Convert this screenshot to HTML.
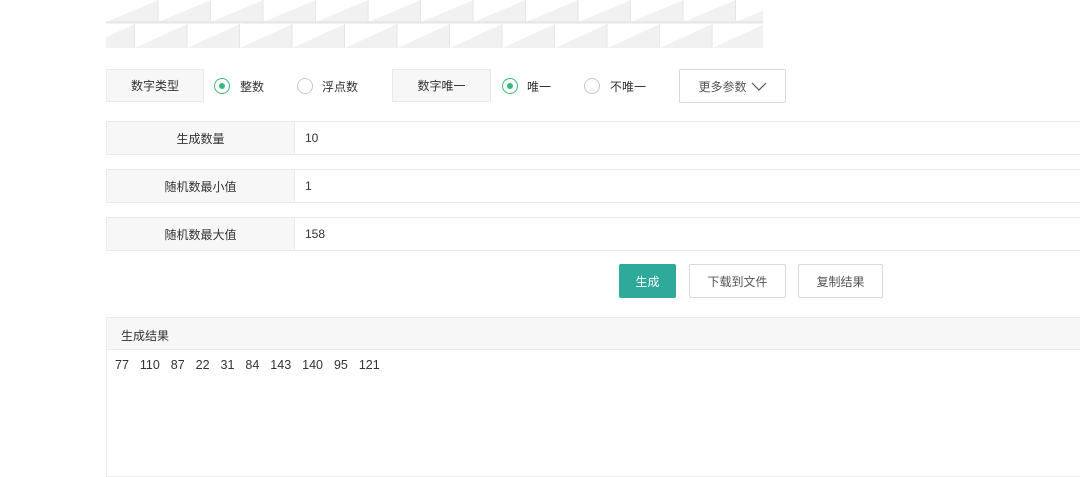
<!DOCTYPE html>
<html><head><meta charset="utf-8"><style>
body{margin:0;width:1080px;height:471px;overflow:hidden;background:#fff;font-family:"Liberation Sans","Noto Sans CJK SC",sans-serif;font-size:12px;color:#333;position:relative}
.a{position:absolute;box-sizing:border-box}
.lbl{background:#f7f7f7;border:1px solid #eaeaea;display:flex;align-items:center;justify-content:center}
.radio{width:16px;height:16px;border:1px solid #c8c8c8;border-radius:50%;box-sizing:border-box}
.on{border-color:#3cb878}
.on::after{content:"";position:absolute;left:4px;top:4px;width:6px;height:6px;border-radius:50%;background:#3cb878}
.row{border:1px solid #eaeaea;border-right:none}
.btn{border:1px solid #d9d9d9;background:#fff;display:flex;align-items:center;justify-content:center;border-radius:2px}
</style></head><body>
<svg class="a" style="left:106px;top:0" width="657" height="48">
<defs>
<pattern id="p1" x="0" y="0" width="52.5" height="22" patternUnits="userSpaceOnUse"><rect width="52.5" height="22" fill="#fff"/><polygon points="0,22 52.5,0 52.5,22" fill="#f1f1f1"/><rect x="51.5" width="1.5" height="22" fill="#e6e6e6"/></pattern>
<pattern id="p2" x="29" y="0" width="52.5" height="24" patternUnits="userSpaceOnUse"><rect width="52.5" height="24" fill="#fff"/><polygon points="0,24 52.5,0 52.5,24" fill="#f1f1f1"/><rect x="51.5" width="1.5" height="24" fill="#e6e6e6"/></pattern>
</defs>
<rect x="0" y="0" width="657" height="21" fill="url(#p1)"/>
<rect x="0" y="21" width="657" height="2" fill="#e8e8e8"/>
<rect x="0" y="23" width="657" height="25" fill="url(#p2)"/>
</svg>
<div class="a lbl" style="left:106px;top:69px;width:98px;height:33px">数字类型</div>
<div class="a radio on" style="left:214px;top:78px"></div><div class="a" style="left:240px;top:78px">整数</div>
<div class="a radio" style="left:297px;top:78px"></div><div class="a" style="left:322px;top:78px">浮点数</div>
<div class="a lbl" style="left:392px;top:69px;width:99px;height:33px">数字唯一</div>
<div class="a radio on" style="left:502px;top:78px"></div><div class="a" style="left:527px;top:78px">唯一</div>
<div class="a radio" style="left:584px;top:78px"></div><div class="a" style="left:610px;top:78px">不唯一</div>
<div class="a btn" style="left:679px;top:69px;width:107px;height:34px;color:#555">更多参数 <svg width="16" height="10" style="margin-left:4px"><path d="M1 2 L8 9 L15 2" fill="none" stroke="#555" stroke-width="1.2"/></svg></div>

<div class="a row" style="left:106px;top:121px;width:974px;height:34px"></div>
<div class="a lbl" style="left:106px;top:121px;width:189px;height:34px">生成数量</div><div class="a" style="left:305px;top:131px">10</div>
<div class="a row" style="left:106px;top:169px;width:974px;height:34px"></div>
<div class="a lbl" style="left:106px;top:169px;width:189px;height:34px">随机数最小值</div><div class="a" style="left:305px;top:179px">1</div>
<div class="a row" style="left:106px;top:217px;width:974px;height:34px"></div>
<div class="a lbl" style="left:106px;top:217px;width:189px;height:34px">随机数最大值</div><div class="a" style="left:305px;top:227px">158</div>

<div class="a" style="left:619px;top:264px;width:57px;height:34px;background:#2fa999;color:#fff;display:flex;align-items:center;justify-content:center;border-radius:2px">生成</div>
<div class="a btn" style="left:689px;top:264px;width:97px;height:34px;color:#555">下载到文件</div>
<div class="a btn" style="left:798px;top:264px;width:85px;height:34px;color:#555">复制结果</div>

<div class="a" style="left:106px;top:317px;width:974px;height:160px;border:1px solid #eaeaea;border-right:none"></div>
<div class="a" style="left:107px;top:318px;width:973px;height:32px;background:#f7f7f7;border-bottom:1px solid #eaeaea;padding:9px 0 0 14px">生成结果</div>
<div class="a" style="left:115px;top:358px;font-size:12.5px;word-spacing:7.5px">77 110 87 22 31 84 143 140 95 121</div>
</body></html>
